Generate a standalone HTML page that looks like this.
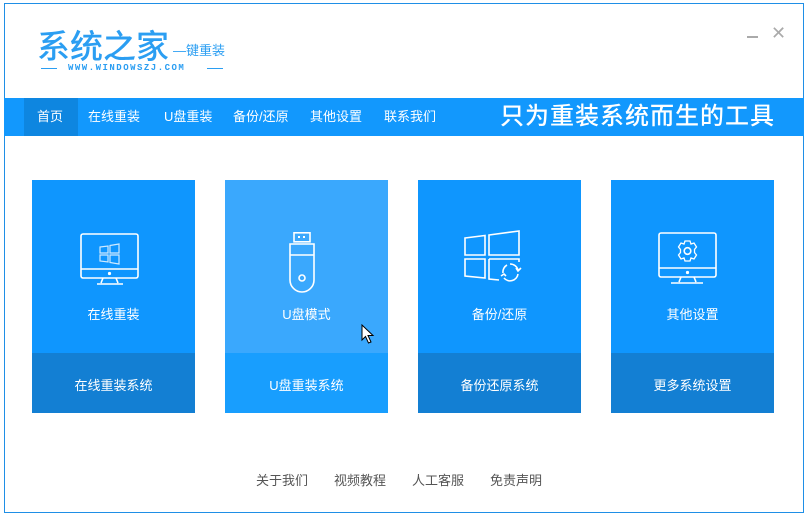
<!DOCTYPE html>
<html><head><meta charset="utf-8"><style>
*{margin:0;padding:0;box-sizing:border-box}
body{width:807px;height:515px;background:#fff;position:relative;overflow:hidden;font-family:"Liberation Sans","Noto Sans CJK SC",sans-serif}
.frame{position:absolute;left:4px;top:3px;width:800px;height:510px;border:1px solid #1f8fe6}
.abs{position:absolute}
.nav{position:absolute;left:4px;top:98px;width:800px;height:38px;background:#1298fd}
.nav span{position:absolute;top:0;line-height:38px;color:#fff;font-size:13px}
.card{position:absolute;top:180px;width:163px;height:233px;background:#0f96fe}
.card .b{position:absolute;left:0;top:173px;width:163px;height:60px;background:#137fd3;color:#fff;font-size:13px;text-align:center;line-height:66px}
.card .t{position:absolute;left:0;top:124px;width:163px;text-align:center;color:#fff;font-size:13px}
.card svg{position:absolute}
.foot{position:absolute;top:470px;font-size:13px;color:#555}
</style></head><body>
<div class="frame"></div>
<div class="abs" style="left:37px;top:20px;font-size:33px;color:#2b9ef2;font-weight:500">系统之家</div>
<div class="abs" style="left:173px;top:40px;font-size:13px;color:#2b9ef2">—键重装</div>
<div class="abs" style="left:41px;top:68px;width:16px;height:1px;background:#2b9ef2"></div>
<div class="abs" style="left:207px;top:68px;width:16px;height:1px;background:#2b9ef2"></div>
<div class="abs" style="left:68px;top:63px;font-size:9px;color:#2b9ef2;letter-spacing:1.5px;font-family:'Liberation Mono',monospace;font-weight:bold">WWW.WINDOWSZJ.COM</div>
<div class="abs" style="left:747px;top:36px;width:11px;height:2px;background:#aaa"></div>
<div class="abs" style="left:771px;top:23px;font-size:18px;color:#aaa">✕</div>
<div class="nav">
<div class="abs" style="left:20px;top:0;width:54px;height:38px;background:#0e86e0"></div>
<span style="left:33px">首页</span><span style="left:84px">在线重装</span><span style="left:160px">U盘重装</span><span style="left:229px">备份/还原</span><span style="left:306px">其他设置</span><span style="left:380px">联系我们</span>
<span style="left:496px;font-size:24px;font-weight:500;letter-spacing:1px">只为重装系统而生的工具</span>
</div>
<div class="card" style="left:32px">
<svg style="left:48px;top:53px" width="60" height="60" viewBox="0 0 60 60" fill="none" stroke="#fff" stroke-width="1.6"><rect x="1" y="1" width="57" height="44" rx="2"/><line x1="1" y1="36" x2="58" y2="36"/><circle cx="29.5" cy="40.5" r=".8" fill="#fff"/><path d="M23 45 L21 50 M36 45 L38 50 M17 51 H43"/><path d="M20 14 L28 13 V20 H20 Z M30 12.5 L39 11 V20 H30 Z M20 22 H28 V29 L20 28 Z M30 22 H39 V31 L30 29.5Z" stroke-width="1.2" opacity=".8"/></svg>
<div class="t">在线重装</div><div class="b">在线重装系统</div></div>
<div class="card" style="left:225px;background:#3aa8fd">
<svg style="left:63px;top:52px" width="30" height="62" viewBox="0 0 30 62" fill="none" stroke="#fff" stroke-width="1.6"><rect x="6" y="0.8" width="16" height="9"/><rect x="10" y="4" width="2" height="2" fill="#fff" stroke="none"/><rect x="15" y="4" width="2" height="2" fill="#fff" stroke="none"/><path d="M2 12 H26 V48 A12 12 0 0 1 2 48 Z"/><line x1="2" y1="23" x2="26" y2="23"/><circle cx="14" cy="46" r="3"/></svg>
<div class="t">U盘模式</div><div class="b" style="background:#189efe">U盘重装系统</div>
<svg style="left:136px;top:144px" width="14" height="20" viewBox="0 0 14 20"><path d="M1 1 V16 L4.5 12.5 L7.5 19 L10 18 L7 11.5 H12 Z" fill="#fff" stroke="#000" stroke-width="1"/></svg></div>
<div class="card" style="left:418px">
<svg style="left:45px;top:50px" width="62" height="62" viewBox="0 0 62 62" fill="none" stroke="#fff" stroke-width="1.6"><path d="M2 8 L22 5.5 V25 H2Z M26 5 L56 1 V25 H26Z M2 29 H22 V48 L2 46Z M26 29 H56 V32 M26 29 V49 L36 50"/><path d="M47 34 A8 8 0 0 1 55 40 M55 44 A8 8 0 0 1 41 48 M40 43 A8 8 0 0 1 44 35"/><path d="M53 38 L55 41 L58 38 M43 46 L41 44 L38 46" /></svg>
<div class="t">备份/还原</div><div class="b">备份还原系统</div></div>
<div class="card" style="left:611px">
<svg style="left:47px;top:52px" width="60" height="56" viewBox="0 0 60 56" fill="none" stroke="#fff" stroke-width="1.6"><rect x="1" y="1" width="57" height="44" rx="2"/><line x1="1" y1="36" x2="58" y2="36"/><circle cx="29.5" cy="40.5" r=".8" fill="#fff"/><path d="M23 45 L21 50 M36 45 L38 50 M13 51 H45"/><circle cx="29.5" cy="19" r="3.3"/><path d="M27 9 H32 L33 12 L36 11 L38.5 15 L36.5 17.5 V20.5 L38.5 23 L36 27 L33 26 L32 29 H27 L26 26 L23 27 L20.5 23 L22.5 20.5 V17.5 L20.5 15 L23 11 L26 12Z" stroke-width="1.3"/></svg>
<div class="t">其他设置</div><div class="b">更多系统设置</div></div>
<div class="foot" style="left:256px">关于我们</div>
<div class="foot" style="left:334px">视频教程</div>
<div class="foot" style="left:412px">人工客服</div>
<div class="foot" style="left:490px">免责声明</div>
</body></html>
